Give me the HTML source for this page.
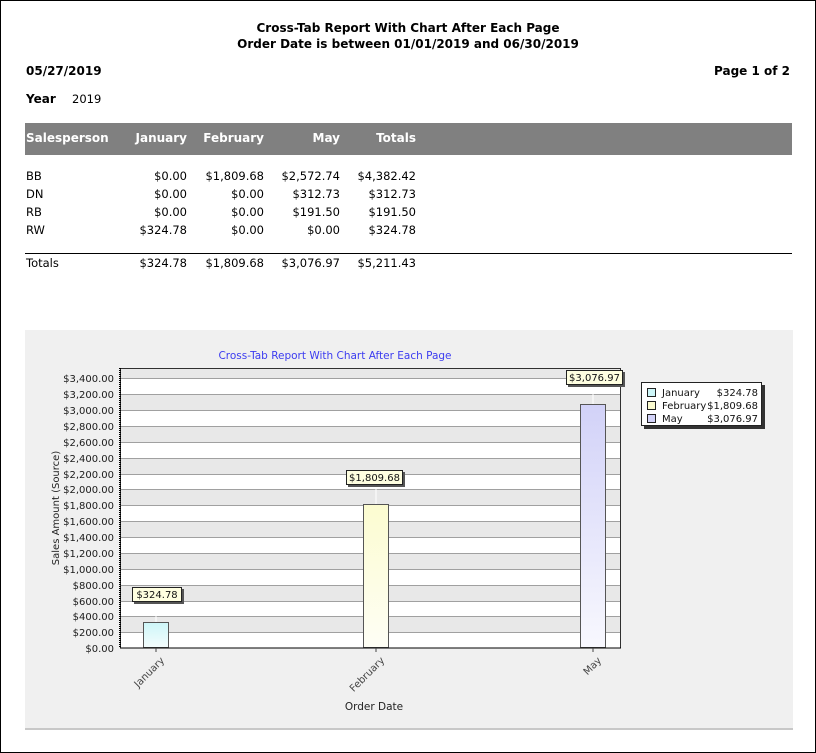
<!DOCTYPE html>
<html><head><style>
body{margin:0;width:816px;height:753px;position:relative;background:#fff;font-family:"DejaVu Sans","Liberation Sans",sans-serif;font-size:11.5px;color:#000;overflow:hidden}
.frame{position:absolute;left:0;top:0;width:814px;height:751px;border:1px solid #000}
.a{position:absolute;white-space:nowrap}
.r{text-align:right}
.b{font-weight:bold}
.hdr{position:absolute;left:25px;top:123px;width:767px;height:32px;background:#808080}
.hdr span{position:absolute;top:8px;color:#fff;font-weight:bold;font-size:12px}
</style></head><body>
<div class="frame"></div>
<div class="a b" style="left:0;width:816px;text-align:center;top:20px;font-size:12px;line-height:16px">Cross-Tab Report With Chart After Each Page<br>Order Date is between 01/01/2019 and 06/30/2019</div>
<div class="a b" style="left:26px;top:64px;font-size:12px">05/27/2019</div>
<div class="a b" style="right:26px;top:64px;font-size:12px">Page 1 of 2</div>
<div class="a b" style="left:26px;top:92px;font-size:12px">Year</div>
<div class="a" style="left:72px;top:92px">2019</div>
<div class="hdr">
<span style="left:1px">Salesperson</span>
<span style="right:605px">January</span>
<span style="right:528px">February</span>
<span style="right:452px">May</span>
<span style="right:376px">Totals</span>
</div>
<div class="a" style="left:26px;top:167px;line-height:18px">BB<br>DN<br>RB<br>RW</div>
<div class="a r" style="right:629px;top:167px;line-height:18px">$0.00<br>$0.00<br>$0.00<br>$324.78</div>
<div class="a r" style="right:552px;top:167px;line-height:18px">$1,809.68<br>$0.00<br>$0.00<br>$0.00</div>
<div class="a r" style="right:476px;top:167px;line-height:18px">$2,572.74<br>$312.73<br>$191.50<br>$0.00</div>
<div class="a r" style="right:400px;top:167px;line-height:18px">$4,382.42<br>$312.73<br>$191.50<br>$324.78</div>
<div class="a" style="left:25px;top:253px;width:767px;height:1px;background:#000"></div>
<div class="a" style="left:26px;top:256px">Totals</div>
<div class="a r" style="right:629px;top:256px">$324.78</div>
<div class="a r" style="right:552px;top:256px">$1,809.68</div>
<div class="a r" style="right:476px;top:256px">$3,076.97</div>
<div class="a r" style="right:400px;top:256px">$5,211.43</div>

<svg class="a" style="left:0;top:0" width="816" height="753" font-family="DejaVu Sans, Liberation Sans, sans-serif">
<defs>
<linearGradient id="gj" x1="0" y1="0" x2="0" y2="1"><stop offset="0" stop-color="#cdf6f8"/><stop offset="1" stop-color="#f4fdfd"/></linearGradient>
<linearGradient id="gf" x1="0" y1="0" x2="0" y2="1"><stop offset="0" stop-color="#fcfcd0"/><stop offset="1" stop-color="#fefef5"/></linearGradient>
<linearGradient id="gm" x1="0" y1="0" x2="0" y2="1"><stop offset="0" stop-color="#d2d2f8"/><stop offset="1" stop-color="#f8f8fe"/></linearGradient>
</defs>
<rect x="25" y="330" width="768" height="398" fill="#f0f0f0"/>
<line x1="25" y1="729" x2="793" y2="729" stroke="#c8c8c8" stroke-width="2"/>
<text x="335" y="359" fill="#3c3cf0" font-size="10.5" text-anchor="middle">Cross-Tab Report With Chart After Each Page</text>
<rect x="120" y="368" width="501" height="280" fill="#e8e8e8"/>
<g fill="#fff">
<rect x="120" y="378" width="501" height="16"/><rect x="120" y="410" width="501" height="16"/><rect x="120" y="442" width="501" height="16"/><rect x="120" y="474" width="501" height="16"/><rect x="120" y="505" width="501" height="16"/><rect x="120" y="537" width="501" height="16"/><rect x="120" y="569" width="501" height="16"/><rect x="120" y="601" width="501" height="16"/><rect x="120" y="632" width="501" height="16"/>
</g>
<g stroke="#a0a0a0" stroke-width="1">
<line x1="120" y1="378.5" x2="621" y2="378.5"/><line x1="120" y1="394.5" x2="621" y2="394.5"/><line x1="120" y1="410.5" x2="621" y2="410.5"/><line x1="120" y1="426.5" x2="621" y2="426.5"/><line x1="120" y1="442.5" x2="621" y2="442.5"/><line x1="120" y1="458.5" x2="621" y2="458.5"/><line x1="120" y1="474.5" x2="621" y2="474.5"/><line x1="120" y1="489.5" x2="621" y2="489.5"/><line x1="120" y1="505.5" x2="621" y2="505.5"/><line x1="120" y1="521.5" x2="621" y2="521.5"/><line x1="120" y1="537.5" x2="621" y2="537.5"/><line x1="120" y1="553.5" x2="621" y2="553.5"/><line x1="120" y1="569.5" x2="621" y2="569.5"/><line x1="120" y1="585.5" x2="621" y2="585.5"/><line x1="120" y1="601.5" x2="621" y2="601.5"/><line x1="120" y1="616.5" x2="621" y2="616.5"/><line x1="120" y1="632.5" x2="621" y2="632.5"/>
</g>
<rect x="120.5" y="368.5" width="500" height="279.5" fill="none" stroke="#303030"/>
<line x1="120" y1="368" x2="120" y2="648" stroke="#000" stroke-width="2" stroke-dasharray="1 1"/>
<g font-size="10" fill="#1a1a1a" text-anchor="end">
<text x="114" y="382">$3,400.00</text><text x="114" y="398">$3,200.00</text><text x="114" y="414">$3,000.00</text><text x="114" y="430">$2,800.00</text><text x="114" y="446">$2,600.00</text><text x="114" y="462">$2,400.00</text><text x="114" y="478">$2,200.00</text><text x="114" y="493">$2,000.00</text><text x="114" y="509">$1,800.00</text><text x="114" y="525">$1,600.00</text><text x="114" y="541">$1,400.00</text><text x="114" y="557">$1,200.00</text><text x="114" y="573">$1,000.00</text><text x="114" y="589">$800.00</text><text x="114" y="605">$600.00</text><text x="114" y="620">$400.00</text><text x="114" y="636">$200.00</text><text x="114" y="652">$0.00</text>
</g>
<text transform="translate(59,508) rotate(-90)" font-size="10" fill="#222" text-anchor="middle">Sales Amount (Source)</text>
<line x1="156" y1="605" x2="156" y2="622" stroke="#fff"/>
<line x1="376" y1="486" x2="376" y2="504" stroke="#fff"/>
<line x1="593" y1="386" x2="593" y2="404" stroke="#fff"/>
<rect x="143.5" y="622.5" width="25" height="25" fill="url(#gj)" stroke="#555"/>
<rect x="363.5" y="504.5" width="25" height="143" fill="url(#gf)" stroke="#555"/>
<rect x="580.5" y="404.5" width="25" height="243" fill="url(#gm)" stroke="#555"/>
<g font-size="10" fill="#111">
<rect x="134" y="589" width="50" height="15" fill="#555"/><rect x="132.5" y="587.5" width="49" height="14" fill="#fefee0" stroke="#222"/><text x="157" y="598" text-anchor="middle">$324.78</text>
<rect x="348" y="472" width="57" height="15" fill="#555"/><rect x="346.5" y="470.5" width="56" height="14" fill="#fefee0" stroke="#222"/><text x="374.5" y="481" text-anchor="middle">$1,809.68</text>
<rect x="568" y="372" width="57" height="15" fill="#555"/><rect x="566.5" y="370.5" width="56" height="14" fill="#fefee0" stroke="#222"/><text x="594.5" y="381" text-anchor="middle">$3,076.97</text>
</g>
<line x1="120" y1="648" x2="621" y2="648" stroke="#000"/>
<g stroke="#444"><line x1="156" y1="648" x2="156" y2="652"/><line x1="376" y1="648" x2="376" y2="652"/><line x1="593" y1="648" x2="593" y2="652"/></g>
<g font-size="10" fill="#444" text-anchor="end">
<text transform="translate(165,661) rotate(-45)">January</text>
<text transform="translate(385,661) rotate(-45)">February</text>
<text transform="translate(602,661) rotate(-45)">May</text>
</g>
<text x="374" y="710" font-size="10.5" fill="#222" text-anchor="middle">Order Date</text>
<rect x="644" y="385" width="121" height="44" fill="#333"/>
<rect x="641.5" y="382.5" width="120" height="43" fill="#fff" stroke="#222"/>
<g font-size="10" fill="#111">
<rect x="647.5" y="388.5" width="8" height="8" fill="#cdf6f8" stroke="#222"/><text x="662" y="396">January</text><text x="758" y="396" text-anchor="end">$324.78</text>
<rect x="647.5" y="401.5" width="8" height="8" fill="#fcfcd0" stroke="#222"/><text x="662" y="409">February</text><text x="758" y="409" text-anchor="end">$1,809.68</text>
<rect x="647.5" y="414.5" width="8" height="8" fill="#d2d2f8" stroke="#222"/><text x="662" y="422">May</text><text x="758" y="422" text-anchor="end">$3,076.97</text>
</g>
</svg>
</body></html>
